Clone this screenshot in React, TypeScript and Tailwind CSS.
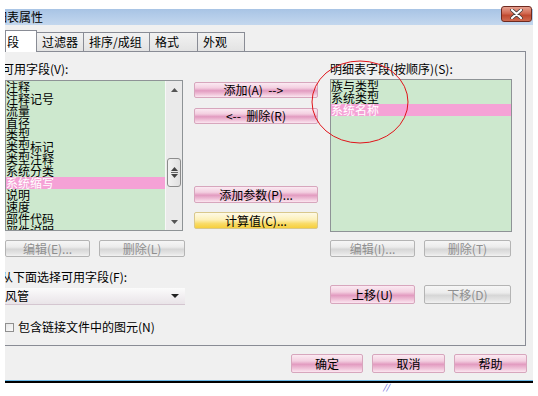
import React from "react";

const font = { fontFamily: '"Noto Sans CJK SC", "Noto Sans", sans-serif' };

function Btn({
  children,
  w,
  h = "h-[17px]",
  kind = "pink",
}: {
  children: React.ReactNode;
  w: string;
  h?: string;
  kind?: "pink" | "gray" | "yellow";
}) {
  const cls =
    kind === "pink"
      ? "border-[#d7a6bd] bg-[linear-gradient(to_bottom,#fbeaf2_0%,#f3cfe0_35%,#e29bc0_55%,#f0c3d9_80%,#fbe6f0_100%)] text-black"
      : kind === "yellow"
      ? "border-[#d9c88c] bg-[linear-gradient(to_bottom,#fefae6_0%,#fdf0b8_45%,#f9dc6a_70%,#f7cf3c_100%)] text-black"
      : "border-[#b4b4b4] bg-[linear-gradient(to_bottom,#f6f6f6_0%,#ececec_40%,#d6d6d6_55%,#e6e6e6_85%,#f2f2f2_100%)] text-[#8f8f8f]";
  return (
    <div
      className={`${w} ${h} ${cls} flex shrink-0 items-center justify-center rounded-[2px] border text-[12px] leading-none whitespace-pre`}
    >
      {children}
    </div>
  );
}

function ListBox({
  items,
  selected,
  w,
  h,
  scroll,
}: {
  items: string[];
  selected: number;
  w: string;
  h: string;
  scroll?: boolean;
}) {
  return (
    <div className={`${w} ${h} flex shrink-0 border border-[#8e9396] bg-[#cde8ce] overflow-hidden`}>
      <div className="flex-1 flex flex-col overflow-hidden">
        {items.map((t, i) => (
          <div
            key={t}
            className={`h-[12px] shrink-0 text-[12px] leading-[12px] whitespace-nowrap ${
              i === selected ? "bg-[#f5a2d6] text-white" : "text-black"
            }`}
          >
            {t}
          </div>
        ))}
      </div>
      {scroll && (
        <div className="w-[17px] shrink-0 bg-[#eaeaea] border-l border-[#f7f7f7] flex flex-col items-center">
          <div className="h-[17px] flex items-center justify-center">
            <svg width="7" height="4" viewBox="0 0 7 4">
              <path d="M0 4 L3.5 0 L7 4 Z" fill="#555" />
            </svg>
          </div>
          <div className="flex-1 w-full flex flex-col">
            <div className="h-[60px]" />
            <div className="mx-[1px] h-[29px] rounded-[3px] border border-[#8c8c8c] bg-[linear-gradient(to_right,#f2f2f2,#e0e0e0)] flex flex-col items-center justify-center gap-[1px]">
              <svg width="7" height="4" viewBox="0 0 7 4">
                <path d="M0 4 L3.5 0 L7 4 Z" fill="#444" />
              </svg>
              <div className="w-[7px] h-[1px] bg-[#666]" />
              <svg width="7" height="4" viewBox="0 0 7 4">
                <path d="M0 0 L3.5 4 L7 0 Z" fill="#444" />
              </svg>
            </div>
          </div>
          <div className="h-[17px] flex items-center justify-center">
            <svg width="7" height="4" viewBox="0 0 7 4">
              <path d="M0 0 L3.5 4 L7 0 Z" fill="#555" />
            </svg>
          </div>
        </div>
      )}
    </div>
  );
}

export default function App() {
  const left = [
    "注释",
    "注释记号",
    "流量",
    "直径",
    "类型",
    "类型标记",
    "类型注释",
    "系统分类",
    "系统缩写",
    "说明",
    "速度",
    "部件代码",
    "部件说明",
  ];
  const right = ["族与类型", "系统类型", "系统名称"];

  return (
    <div className="relative w-[538px] h-[396px] bg-white overflow-hidden flex" style={font}>
      {/* left white strip */}
      <div className="w-[5px] shrink-0" />
      <div className="w-[528px] shrink-0 flex flex-col overflow-hidden">
        <div className="h-[9px] shrink-0 bg-white" />
        {/* title bar */}
        <div className="h-[16px] shrink-0 bg-[linear-gradient(to_bottom,#a8c4e5,#c3d7ee)] flex items-center overflow-hidden">
          <span className="ml-[-10px] text-[12px] leading-none text-black whitespace-nowrap">细表属性</span>
        </div>
        {/* body */}
        <div className="h-[355px] shrink-0 bg-[#f0f0f0] flex flex-col">
          {/* tabs */}
          <div className="h-[26px] shrink-0 flex items-end">
            <div className="w-[32px] h-[22px] bg-white border border-b-0 border-[#898c95] mb-[-1px] relative z-10 flex items-center pl-[1px] text-[12px] leading-none">
              段
            </div>
            {[
              ["过滤器", "w-[47px]"],
              ["排序/成组", "w-[66px]"],
              ["格式", "w-[48px]"],
              ["外观", "w-[47px]"],
            ].map(([t, w]) => (
              <div
                key={t}
                className={`${w} h-[19px] border border-l-0 border-b-0 border-[#898c95] bg-[linear-gradient(to_bottom,#f2f2f2,#e3e3e3)] flex items-center pl-[5px] text-[12px] leading-none`}
              >
                {t}
              </div>
            ))}
          </div>
          {/* panel */}
          <div className="w-[521px] h-[295px] shrink-0 border-t border-r border-b border-[#898c95] flex">
            {/* left column */}
            <div className="w-[180px] shrink-0 flex flex-col">
              <div className="mt-[11px] h-[12px] text-[12px] leading-[12px] ml-[-3px] whitespace-nowrap">可用字段(V):</div>
              <div className="mt-[5px]">
                <ListBox items={left} selected={8} w="w-[178px]" h="h-[151px]" scroll />
              </div>
              <div className="mt-[9px] flex gap-[9px]">
                <Btn w="w-[85px]" kind="gray">编辑(E)...</Btn>
                <Btn w="w-[86px]" kind="gray">删除(L)</Btn>
              </div>
              <div className="mt-[14px] h-[12px] text-[12px] leading-[12px] ml-[-4px] whitespace-nowrap">从下面选择可用字段(F):</div>
              <div className="mt-[5px] h-[17px] w-[180px] flex items-center justify-between bg-[linear-gradient(to_bottom,#fbfbfb,#e9e4e8)] border-b border-[#d4c6d0]">
                <span className="text-[12px] leading-none">风管</span>
                <svg width="8" height="4" viewBox="0 0 8 4" className="mr-[6px]">
                  <path d="M0 0 L4 4 L8 0 Z" fill="#222" />
                </svg>
              </div>
              <div className="mt-[16px] flex items-center gap-[4px]">
                <div className="w-[9px] h-[9px] border border-[#8f8f8f] bg-[linear-gradient(135deg,#e6e6e6,#fbfbfb)]" />
                <span className="text-[12px] leading-[12px] whitespace-nowrap">包含链接文件中的图元(N)</span>
              </div>
            </div>
            {/* middle column */}
            <div className="ml-[9px] w-[124px] shrink-0 flex flex-col">
              <div className="mt-[30px]">
                <Btn w="w-[124px]" h="h-[16px]">{"添加(A)  -->  "}</Btn>
              </div>
              <div className="mt-[10px]">
                <Btn w="w-[124px]" h="h-[16px]">{"<--  删除(R)"}</Btn>
              </div>
              <div className="mt-[62px]">
                <Btn w="w-[124px]">添加参数(P)...</Btn>
              </div>
              <div className="mt-[9px]">
                <Btn w="w-[124px]" kind="yellow">计算值(C)...</Btn>
              </div>
            </div>
            {/* right column */}
            <div className="ml-[12px] w-[183px] shrink-0 flex flex-col">
              <div className="mt-[11px] h-[12px] text-[12px] leading-[12px] whitespace-nowrap">明细表字段(按顺序)(S):</div>
              <div className="mt-[4px]">
                <ListBox items={right} selected={2} w="w-[182px]" h="h-[153px]" />
              </div>
              <div className="mt-[8px] flex gap-[9px]">
                <Btn w="w-[85px]" kind="gray">编辑(I)...</Btn>
                <Btn w="w-[87px]" kind="gray">删除(T)</Btn>
              </div>
              <div className="mt-[28px] flex gap-[9px]">
                <Btn w="w-[85px]" h="h-[19px]">上移(U)</Btn>
                <Btn w="w-[87px]" h="h-[19px]" kind="gray">下移(D)</Btn>
              </div>
            </div>
          </div>
          {/* bottom buttons */}
          <div className="mt-[8px] flex justify-end gap-[9px] pr-[6px]">
            <Btn w="w-[72px]" h="h-[19px]">确定</Btn>
            <Btn w="w-[73px]" h="h-[19px]">取消</Btn>
            <Btn w="w-[73px]" h="h-[19px]">帮助</Btn>
          </div>
        </div>
        <div className="h-[1px] shrink-0 bg-[#6ab8e6]" />
        <div className="h-[2px] shrink-0 bg-black" />
        <div className="pl-[378px] text-[8px] leading-none text-[#3a3ad0] italic">//</div>
      </div>

      {/* close button */}
      <div className="absolute left-[501px] top-[6px] w-[31px] h-[16px] rounded-[3px] border border-[#6e2a20] bg-[linear-gradient(to_bottom,#e6a090,#d26a52_45%,#c04a30_60%,#cf6a50)] flex items-center justify-center">
        <svg width="13" height="10" viewBox="0 0 13 10">
          <path d="M2 1 L11 9 M11 1 L2 9" stroke="#3c3c3c" strokeWidth="3.6" strokeLinecap="round" />
          <path d="M2 1 L11 9 M11 1 L2 9" stroke="#ffffff" strokeWidth="2.2" strokeLinecap="round" />
        </svg>
      </div>

      {/* red annotation ellipse */}
      <svg className="absolute left-[310px] top-[59px]" width="102" height="88" viewBox="0 0 102 88">
        <ellipse cx="50" cy="43" rx="48" ry="41" fill="none" stroke="#e0141a" strokeWidth="1" />
      </svg>
    </div>
  );
}
